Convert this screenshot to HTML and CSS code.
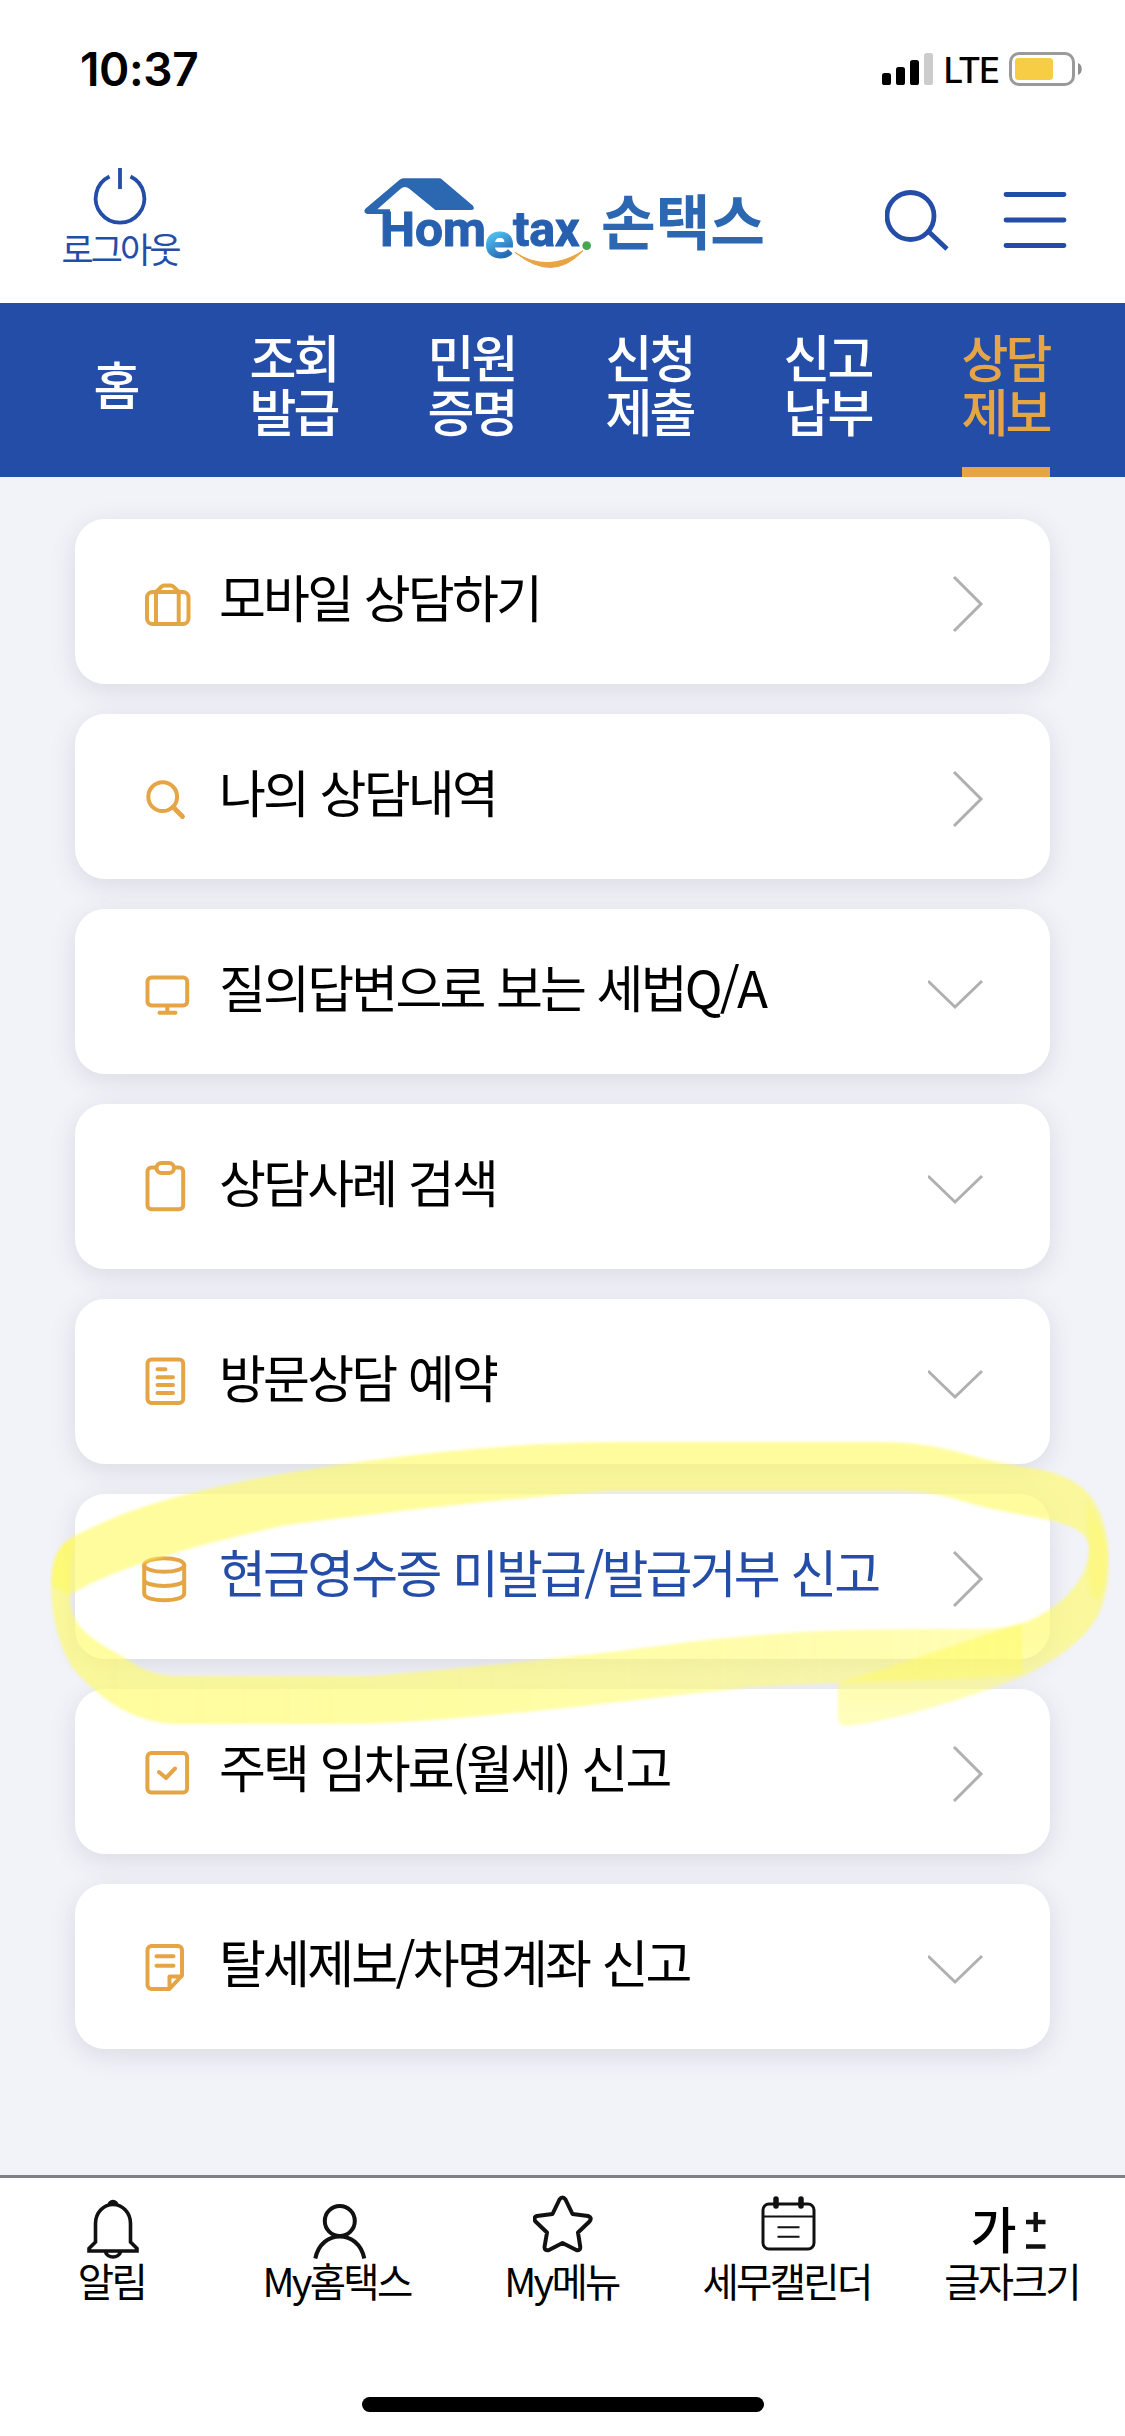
FILE: index.html
```html
<!DOCTYPE html>
<html lang="ko">
<head>
<meta charset="utf-8">
<meta name="viewport" content="width=device-width">
<title>손택스</title>
<link rel="stylesheet" href="styles.css">
</head>
<body>
<div class="status">
  <span class="time">10:37</span>
  <div class="status-right">
    <svg class="signal" width="51" height="33" viewBox="0 0 51 33"><rect x="0" y="20" width="9" height="12" rx="2.6"/><rect x="14" y="14" width="9" height="18" rx="2.6"/><rect x="28" y="7" width="9" height="25" rx="2.6"/><rect x="42" y="0" width="9" height="32" rx="2.6" fill="#ccc"/></svg>
    <span class="lte">LTE</span>
    <svg class="battery" width="74" height="34" viewBox="0 0 74 34"><rect x="1.5" y="1.5" width="63" height="31" rx="8.5" fill="none" stroke="#9a9a9a" stroke-width="3"/><rect x="6" y="6" width="38" height="22" rx="3.5" fill="#f7cd46"/><path d="M69 11c5 1.500 5 10.500 0 12z" fill="#8f8f8f"/></svg>
  </div>
</div>

<header class="header">
  <a class="logout">
    <svg width="60" height="60" viewBox="0 0 60 60" fill="none" stroke="#244da8" stroke-width="3.800"><path d="M19.500 11.500a24.300 24.300 0 1 0 21 0M30 3v21"/></svg>
    <span>로그아웃</span>
  </a>
  <svg class="logo" width="440" height="120" viewBox="0 0 1320 360">
    <defs><linearGradient id="e" x1="0" y1="0" x2="0.300" y2="1"><stop offset="0.450" stop-color="#4db8ea"/><stop offset="0.900" stop-color="#2467b2"/></linearGradient></defs>
    <path d="M190 55h107q6 0 10 4l92 78q8 13-7 13H286L208 86q-13-10-26 0l-70 62h38v14H82q-14-5-6-16L178 60q6-5 12-5z" fill="#2c68b2"/>
    <g class="logo-latin">
      <text x="120" y="257" font-size="146" textLength="318" lengthAdjust="spacingAndGlyphs">Hom</text>
      <text x="434" y="293" font-size="146" textLength="87" lengthAdjust="spacingAndGlyphs" class="logo-e">e</text>
      <text x="519" y="257" font-size="146" textLength="200" lengthAdjust="spacingAndGlyphs">tax</text>
    </g>
    <circle cx="740" cy="257" r="13" fill="#45a751"/>
    <path d="M525 277q97 64 204-5-90 98-204 5z" fill="#e8a445" stroke="#e8a445" stroke-width="3" stroke-linejoin="round"/>
    <text class="logo-hangul" x="783" y="254" font-size="180" textLength="492" lengthAdjust="spacingAndGlyphs">손택스</text>
  </svg>
  <div class="tools">
    <svg width="66" height="64" viewBox="0 0 66 64" fill="none" stroke="#244da8" stroke-width="4.800"><circle cx="25.500" cy="28" r="23.500"/><path d="M43.500 43.500L62 61"/></svg>
    <svg width="64" height="58" viewBox="0 0 64 58" stroke="#244da8" stroke-width="4.800" stroke-linecap="round"><path d="M3 3.500h58M3 29h58M3 54.500h58"/></svg>
  </div>
</header>

<nav class="tabs">
  <a>홈</a><a>조회<br>발급</a><a>민원<br>증명</a><a>신청<br>제출</a><a>신고<br>납부</a><a class="active">상담<br>제보</a>
</nav>

<main class="list">
  <a class="card">
    <svg class="icon" viewBox="0 0 60 60"><rect x="12" y="18" width="41.500" height="32" rx="5.500"/><path d="M21 18v32M43.700 18v32M20 18c5-1 5-6.500 9-6.500h7c4 0 4 5.500 9 6.500"/></svg>
    <span>모바일 상담하기</span><svg class="chev" viewBox="0 0 60 60"><path d="M26 3l27 27-27 27"/></svg>
  </a>
  <a class="card">
    <svg class="icon" viewBox="0 0 60 60"><circle cx="27.700" cy="27.700" r="14.400"/><path d="M38 38l9.500 9.500" stroke-width="4.800"/></svg>
    <span>나의 상담내역</span><svg class="chev" viewBox="0 0 60 60"><path d="M26 3l27 27-27 27"/></svg>
  </a>
  <a class="card">
    <svg class="icon" viewBox="0 0 60 60"><rect x="12.500" y="13.500" width="39.700" height="28" rx="4"/><path d="M32.300 42v6M24.500 48.700h16"/></svg>
    <span>질의답변으로 보는 세법Q/A</span><svg class="chev" viewBox="0 0 60 60"><path d="M0 17l27 26 27-26"/></svg>
  </a>
  <a class="card">
    <svg class="icon" viewBox="0 0 60 60"><path d="M20 8.500h-3.500a4 4 0 0 0-4 4v33.700a4 4 0 0 0 4 4h27.700a4 4 0 0 0 4-4V12.500a4 4 0 0 0-4-4h-3.500"/><rect x="21.500" y="4" width="17.500" height="10" rx="5"/></svg>
    <span>상담사례 검색</span><svg class="chev" viewBox="0 0 60 60"><path d="M0 17l27 26 27-26"/></svg>
  </a>
  <a class="card">
    <svg class="icon" viewBox="0 0 60 60"><rect x="12.500" y="5.500" width="35.700" height="43.500" rx="4"/><path d="M22.500 15.300h8M22.500 23.200h15.500M22.500 31h15.500M22.500 38.900h15.500"/></svg>
    <span>방문상담 예약</span><svg class="chev" viewBox="0 0 60 60"><path d="M0 17l27 26 27-26"/></svg>
  </a>
  <a class="card current">
    <svg class="icon" viewBox="0 0 60 60"><ellipse cx="29.200" cy="16" rx="20" ry="6.800"/><path d="M9.200 16v28.500c0 9 40 9 40 0V16M9.200 30.500c0 8.500 40 8.500 40 0"/></svg>
    <span>현금영수증 미발급/발급거부 신고</span><svg class="chev" viewBox="0 0 60 60"><path d="M26 3l27 27-27 27"/></svg>
  </a>
  <a class="card">
    <svg class="icon" viewBox="0 0 60 60"><rect x="12.400" y="9" width="39.700" height="39.500" rx="4"/><path d="M24 28l7 6 9-9.500"/></svg>
    <span>주택 임차료(월세) 신고</span><svg class="chev" viewBox="0 0 60 60"><path d="M26 3l27 27-27 27"/></svg>
  </a>
  <a class="card">
    <svg class="icon" viewBox="0 0 60 60"><path d="M34.500 50h-18a4 4 0 0 1-4-4V11a4 4 0 0 1 4-4h26.500a4 4 0 0 1 4 4v25.500zM34.500 49.500v-12h12M21.500 17.300h17M21.500 26.700h17"/></svg>
    <span>탈세제보/차명계좌 신고</span><svg class="chev" viewBox="0 0 60 60"><path d="M0 17l27 26 27-26"/></svg>
  </a>
</main>

<footer class="bottom">
  <div class="bar">
    <a><svg viewBox="0 0 60 66" stroke-width="3.600"><path d="M12.500 47V28.500a17.500 19 0 0 1 35 0V47l6.500 6.500V56H6v-2.500zM26 11.500v-1a4 4 0 0 1 8 0v1M22.500 57a7.700 6.500 0 0 0 15 0"/></svg><span>알림</span></a>
    <a><svg viewBox="0 0 60 66" stroke-width="4"><circle cx="31.800" cy="26" r="15"/><path d="M7.300 63.500c6-29.500 43-29.500 49 0"/></svg><span>My홈택스</span></a>
    <a><svg viewBox="0 0 60 66" stroke-width="4" stroke-linejoin="round"><path d="M26.500 4.500q3-4 6 0l7 14.500 15.500 2q4.500 1.500 1.500 5.500L45 37.500l2.300 14.500q0 4-4 3L29.500 48l-13.500 7q-4.500 1-4.500-3L14 37.500 2.500 26.500q-3-4 1.500-5.500l15.500-2z"/></svg><span>My메뉴</span></a>
    <a><svg viewBox="0 0 60 66" stroke-width="3"><rect x="5" y="9" width="51" height="45" rx="6"/><path d="M5 21.500h51M19.500 32.300h22M19.500 41.700h22" stroke-width="2"/><path d="M18 4v7M43 4v7" stroke-width="5.500" stroke-linecap="round"/></svg><span>세무캘린더</span></a>
    <a><div class="size-icon"><b>가</b><svg viewBox="0 0 22 50" stroke-width="4.400"><path d="M1 17h19.500M10.700 7v20M1 41.500h19.500"/></svg></div><span>글자크기</span></a>
  </div>
  <div class="home"></div>
</footer>

<svg class="marker" width="1125" height="340" viewBox="0 1410 1125 340">
  <defs><linearGradient id="b" gradientUnits="userSpaceOnUse" x1="50" y1="0" x2="1020" y2="0"><stop offset="0" stop-color="#fffb60" stop-opacity="0.620"/><stop offset="0.450" stop-color="#fffb60" stop-opacity="0.580"/><stop offset="1" stop-color="#fffb60" stop-opacity="0.470"/></linearGradient>
  <linearGradient id="t" gradientUnits="userSpaceOnUse" x1="0" y1="1730" x2="0" y2="1630"><stop offset="0" stop-color="#fffb60" stop-opacity="0.400"/><stop offset="1" stop-color="#fffb60" stop-opacity="0.610"/></linearGradient></defs>
  <path class="ink" fill="url(#t)" d="M52 1585C52 1555 58 1543 80 1533C140 1503 200 1490 265 1477C370 1458 500 1442 620 1442H880C945 1442 970 1459 1025 1467C1085 1475 1103 1500 1108 1547C1112 1610 1095 1640 1026 1675C970 1698 890 1722 846 1726Q838 1725 838 1718V1683C900 1665 960 1642 1026 1622C1060 1608 1090 1580 1089 1546C1086 1520 1030 1518 997 1510C950 1500 945 1491 890 1491H610C500 1499 390 1512 287 1525C190 1546 110 1570 70 1595Z"/>
  <path class="ink" fill="url(#b)" d="M52 1573C58 1545 69 1540 76 1538Q70 1560 70 1600C72 1632 100 1643 130 1661Q150 1676 179 1676H373C470 1668 600 1654 681 1643C790 1630 850 1629 960 1629Q1005 1629 1022 1624V1673C1000 1680 880 1680 753 1687C640 1699 450 1724 344 1724H179C135 1724 100 1700 72 1667Q48 1625 52 1573z"/>
  <path class="ink" fill="#fffb60" fill-opacity="0.400" d="M1086 1500Q1104 1530 1107 1550Q1108 1590 1095 1600Q1086 1590 1090 1555z"/>
</svg>
</body>
</html>
```
FILE: styles.css
```css
* { box-sizing: border-box; }
body {
  margin: 0;
  width: 1125px;
  height: 2436px;
  position: relative;
  display: flex;
  flex-direction: column;
  background: #f2f3f9;
  color: #000;
  font-family: "Noto Sans CJK KR", "Noto Sans", sans-serif;
  overflow: hidden;
}
svg { display: block; flex: none; }

.status {
  height: 138px;
  padding: 0 42px 0 80px;
  background: #fff;
  display: flex;
  justify-content: space-between;
  align-items: center;
  font-family: Inter, sans-serif;
}
.time { font-size: 46px; font-weight: 600; letter-spacing: -0.4px; }
.status-right { display: flex; align-items: center; }
.lte { font-size: 35px; font-weight: 500; margin: 2px 11px 0 11px; letter-spacing: -2px; }

.header {
  height: 165px;
  background: #fff;
  padding: 22px 58px 0 60px;
  display: flex;
  align-items: flex-start;
}
.logout {
  width: 120px;
  display: flex;
  flex-direction: column;
  align-items: center;
  padding-top: 5px;
  color: #244da8;
  font-size: 35px;
  line-height: 46px;
  letter-spacing: -2.9px;
  white-space: nowrap;
}
.logo { margin-left: 160px; }
.logo-latin { font-family: Roboto, sans-serif; font-weight: 700; fill: #2760ae; stroke: #2760ae; stroke-width: 3px; stroke-linejoin: round; }
.logo-e { fill: url(#e); stroke: url(#e); }
.logo-hangul { font-family: "Noto Sans CJK KR", sans-serif; font-weight: 700; fill: #2c68b2; }
.tools { margin-left: auto; display: flex; align-items: flex-start; padding-top: 28px; }
.tools svg + svg { margin: 3px 0 0 52px; }

.tabs {
  height: 174px;
  padding: 0 28px;
  background: #244da8;
  color: #fff;
  display: grid;
  grid-template-columns: repeat(6, 178px);
  align-items: center;
  font-size: 51px;
  line-height: 54px;
  font-weight: 500;
  letter-spacing: -2.8px;
  text-align: center;
}
.tabs a { height: 174px; display: flex; flex-direction: column; justify-content: center; padding: 0 3px 15px 0; }
.tabs .active {
  color: #e6a545;
  background: linear-gradient(#e6a545, #e6a545) 44px bottom / 88px 10px no-repeat;
}

.list { flex: 1; padding: 42px 75px 0; display: flex; flex-direction: column; gap: 30px; }
.card {
  height: 165px;
  flex: none;
  padding: 4px 68px 0 60px;
  background: #fff;
  border-radius: 30px;
  box-shadow: 0 6px 26px rgba(60, 60, 80, 0.13);
  display: flex;
  align-items: center;
  font-size: 51px;
  letter-spacing: -2.8px;
  word-spacing: 0.8px;
}
.card span { flex: 1; margin-left: 24px; line-height: 60px; padding-bottom: 16px; white-space: nowrap; }
.card.current { color: #244da8; }
.icon { width: 60px; height: 60px; fill: none; stroke: #e6a545; stroke-width: 4; stroke-linecap: round; stroke-linejoin: round; }
.chev { width: 60px; height: 60px; margin-right: -6px; fill: none; stroke: #b0b0b0; stroke-width: 3; }

.bottom { height: 261px; border-top: 3px solid #808084; background: #fff; display: flex; flex-direction: column; align-items: center; }
.bar { width: 1125px; height: 219px; display: grid; grid-template-columns: repeat(5, 225px); padding-top: 17px; }
.bar a { display: flex; flex-direction: column; align-items: center; font-size: 39.5px; line-height: 46px; letter-spacing: -2.7px; white-space: nowrap; }
.bar a > svg { width: 60px; height: 66px; }
.bar a > span { margin: -4px 2px 0 0; }
.bar svg { fill: none; stroke: #111; }
.size-icon { height: 66px; width: 82px; display: flex; align-items: center; margin-right: 2px; }
.size-icon b { font-size: 50px; font-weight: 500; line-height: 60px; width: 54px; letter-spacing: 0; padding-bottom: 2px; }
.size-icon svg { width: 22px; height: 50px; margin-top: 4px; }
.home { width: 402px; height: 15px; border-radius: 8px; background: #000; }

.marker { position: absolute; left: 0; top: 1410px; pointer-events: none; }
.ink { filter: blur(1.6px); }
```
